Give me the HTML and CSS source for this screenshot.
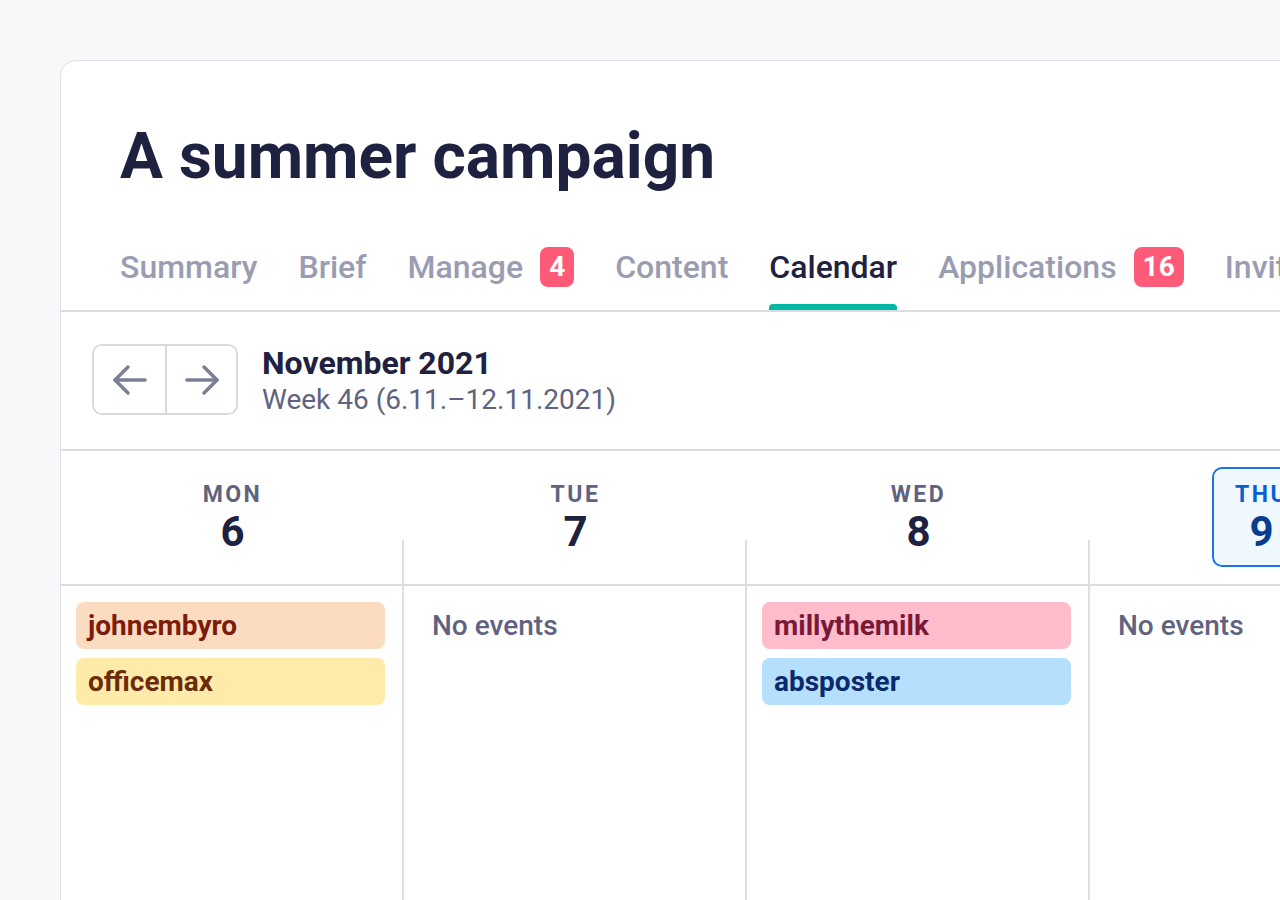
FILE: index.html
```html
<!DOCTYPE html>
<html lang="en">
<head>
    <meta charset="UTF-8">
    <meta name="viewport" content="width=device-width, initial-scale=1.0">
    <title>A summer campaign - Calendar</title>
    <link rel="stylesheet" href="styles.css">
</head>
<body>
    <div class="card">
        <h1 class="title">A summer campaign</h1>

        <nav class="tabs">
            <a class="tab">Summary</a>
            <a class="tab">Brief</a>
            <a class="tab">Manage <span class="badge">4</span></a>
            <a class="tab">Content</a>
            <a class="tab active">Calendar</a>
            <a class="tab">Applications <span class="badge">16</span></a>
            <a class="tab">Invitations</a>
        </nav>

        <div class="toolbar">
            <div class="nav-buttons">
                <button class="nav-btn" aria-label="Previous week">
                    <svg width="36" height="36" viewBox="0 0 36 36" fill="none" stroke="currentColor" stroke-width="3.5" stroke-linecap="round" stroke-linejoin="round"><path d="M33 18H3"/><path d="M16 5L3 18l13 13"/></svg>
                </button>
                <button class="nav-btn" aria-label="Next week">
                    <svg width="36" height="36" viewBox="0 0 36 36" fill="none" stroke="currentColor" stroke-width="3.5" stroke-linecap="round" stroke-linejoin="round"><path d="M3 18h30"/><path d="M20 5l13 13-13 13"/></svg>
                </button>
            </div>
            <div class="period">
                <div class="month">November 2021</div>
                <div class="week">Week 46 (6.11.–12.11.2021)</div>
            </div>
        </div>

        <div class="week-grid">
            <div class="day-head"><div class="day-label"><span class="dow">MON</span><span class="date">6</span></div></div>
            <div class="day-head"><div class="day-label"><span class="dow">TUE</span><span class="date">7</span></div></div>
            <div class="day-head"><div class="day-label"><span class="dow">WED</span><span class="date">8</span></div></div>
            <div class="day-head"><div class="day-label today"><span class="dow">THU</span><span class="date">9</span></div></div>
            <div class="day-head"><div class="day-label"><span class="dow">FRI</span><span class="date">10</span></div></div>

            <div class="day-col">
                <div class="event peach">johnembyro</div>
                <div class="event yellow">officemax</div>
            </div>
            <div class="day-col">
                <div class="empty">No events</div>
            </div>
            <div class="day-col">
                <div class="event pink">millythemilk</div>
                <div class="event blue">absposter</div>
            </div>
            <div class="day-col">
                <div class="empty">No events</div>
            </div>
            <div class="day-col">
                <div class="empty">No events</div>
            </div>
        </div>
    </div>
</body>
</html>
```

FILE: styles.css
```css
body {
    margin: 0;
    height: 900px;
    overflow: hidden;
    background-color: #f7f8fa;
    font-family: Roboto, "Liberation Sans", Arial, sans-serif;
    color: #1e2140;
}
.card {
    margin: 60px 0 0 60px;
    width: 1500px;
    min-height: 900px;
    background: white;
    border: 1px solid #dde1e7;
    border-radius: 16px;
}
.title {
    margin: 0;
    padding: 64px 0 0 59px;
    font-size: 64px;
    line-height: 64px;
    font-weight: 700;
    color: #1e2140;
}
.tabs {
    display: flex;
    align-items: center;
    gap: 41px;
    margin-top: 58px;
    padding-left: 59px;
    border-bottom: 2px solid #d8dce3;
}
.tab {
    position: relative;
    display: flex;
    align-items: center;
    gap: 17px;
    padding-bottom: 23px;
    font-size: 32px;
    line-height: 40px;
    font-weight: 500;
    color: #9a9db2;
    white-space: nowrap;
}
.tab.active {
    color: #1e2140;
}
.tab.active::after {
    content: "";
    position: absolute;
    left: 0;
    right: 0;
    bottom: 0;
    height: 6px;
    border-radius: 4px 4px 0 0;
    background-color: #00b8a3;
}
.badge {
    display: inline-block;
    min-width: 34px;
    height: 40px;
    padding: 0 9px;
    box-sizing: border-box;
    border-radius: 8px;
    background-color: #ff5a77;
    color: white;
    font-size: 28px;
    font-weight: 700;
    line-height: 40px;
    text-align: center;
}
.toolbar {
    display: flex;
    align-items: flex-start;
    gap: 24px;
    padding: 32px 31px;
    border-bottom: 2px solid #d8dce3;
}
.nav-buttons {
    display: flex;
    border: 2px solid #d6d9df;
    border-radius: 10px;
    overflow: hidden;
}
.nav-btn {
    display: flex;
    align-items: center;
    justify-content: center;
    width: 71px;
    height: 67px;
    padding: 0;
    border: none;
    background: white;
    color: #7b7f96;
    cursor: pointer;
}
.nav-btn + .nav-btn {
    border-left: 2px solid #d6d9df;
}
.period {
    margin-top: 1px;
}
.month {
    font-size: 32px;
    line-height: 36px;
    font-weight: 700;
    color: #1e2140;
}
.week {
    margin-top: 2px;
    font-size: 28px;
    line-height: 34px;
    color: #5f6380;
}
.week-grid {
    display: grid;
    grid-template-columns: repeat(5, 343px);
}
.day-head {
    position: relative;
    display: flex;
    justify-content: center;
    height: 135px;
    padding-top: 16px;
    box-sizing: border-box;
    border-bottom: 2px solid #d8dce3;
}
.day-head::after {
    content: "";
    position: absolute;
    right: 0;
    bottom: 0;
    width: 2px;
    height: 44px;
    background-color: #dcdde5;
}
.day-label {
    display: flex;
    flex-direction: column;
    align-items: center;
    width: 100px;
    height: 100px;
    box-sizing: border-box;
    padding-top: 13px;
}
.day-label.today {
    border: 2px solid #1a73e8;
    border-radius: 10px;
    background-color: #eff7ff;
    padding-top: 11px;
}
.dow {
    font-size: 23px;
    line-height: 30px;
    font-weight: 700;
    letter-spacing: 2.5px;
    color: #5f6380;
}
.date {
    font-size: 42px;
    line-height: 44px;
    font-weight: 700;
    color: #1e2140;
}
.today .dow {
    color: #0b5fd0;
}
.today .date {
    color: #0a3d91;
}
.day-col {
    display: flex;
    flex-direction: column;
    gap: 9px;
    min-height: 320px;
    padding: 16px 17px 0 15px;
    border-right: 2px solid #dcdde5;
}
.event {
    height: 47px;
    padding-left: 12px;
    border-radius: 8px;
    font-size: 28px;
    line-height: 47px;
    font-weight: 700;
}
.peach {
    background-color: #fcdcc1;
    color: #7c1c0c;
}
.yellow {
    background-color: #ffeba9;
    color: #6a2c0c;
}
.pink {
    background-color: #ffbccb;
    color: #7a1838;
}
.blue {
    background-color: #b5e0fd;
    color: #0b2a6b;
}
.empty {
    padding-left: 13px;
    font-size: 28px;
    line-height: 47px;
    font-weight: 500;
    color: #5f6380;
}
```
